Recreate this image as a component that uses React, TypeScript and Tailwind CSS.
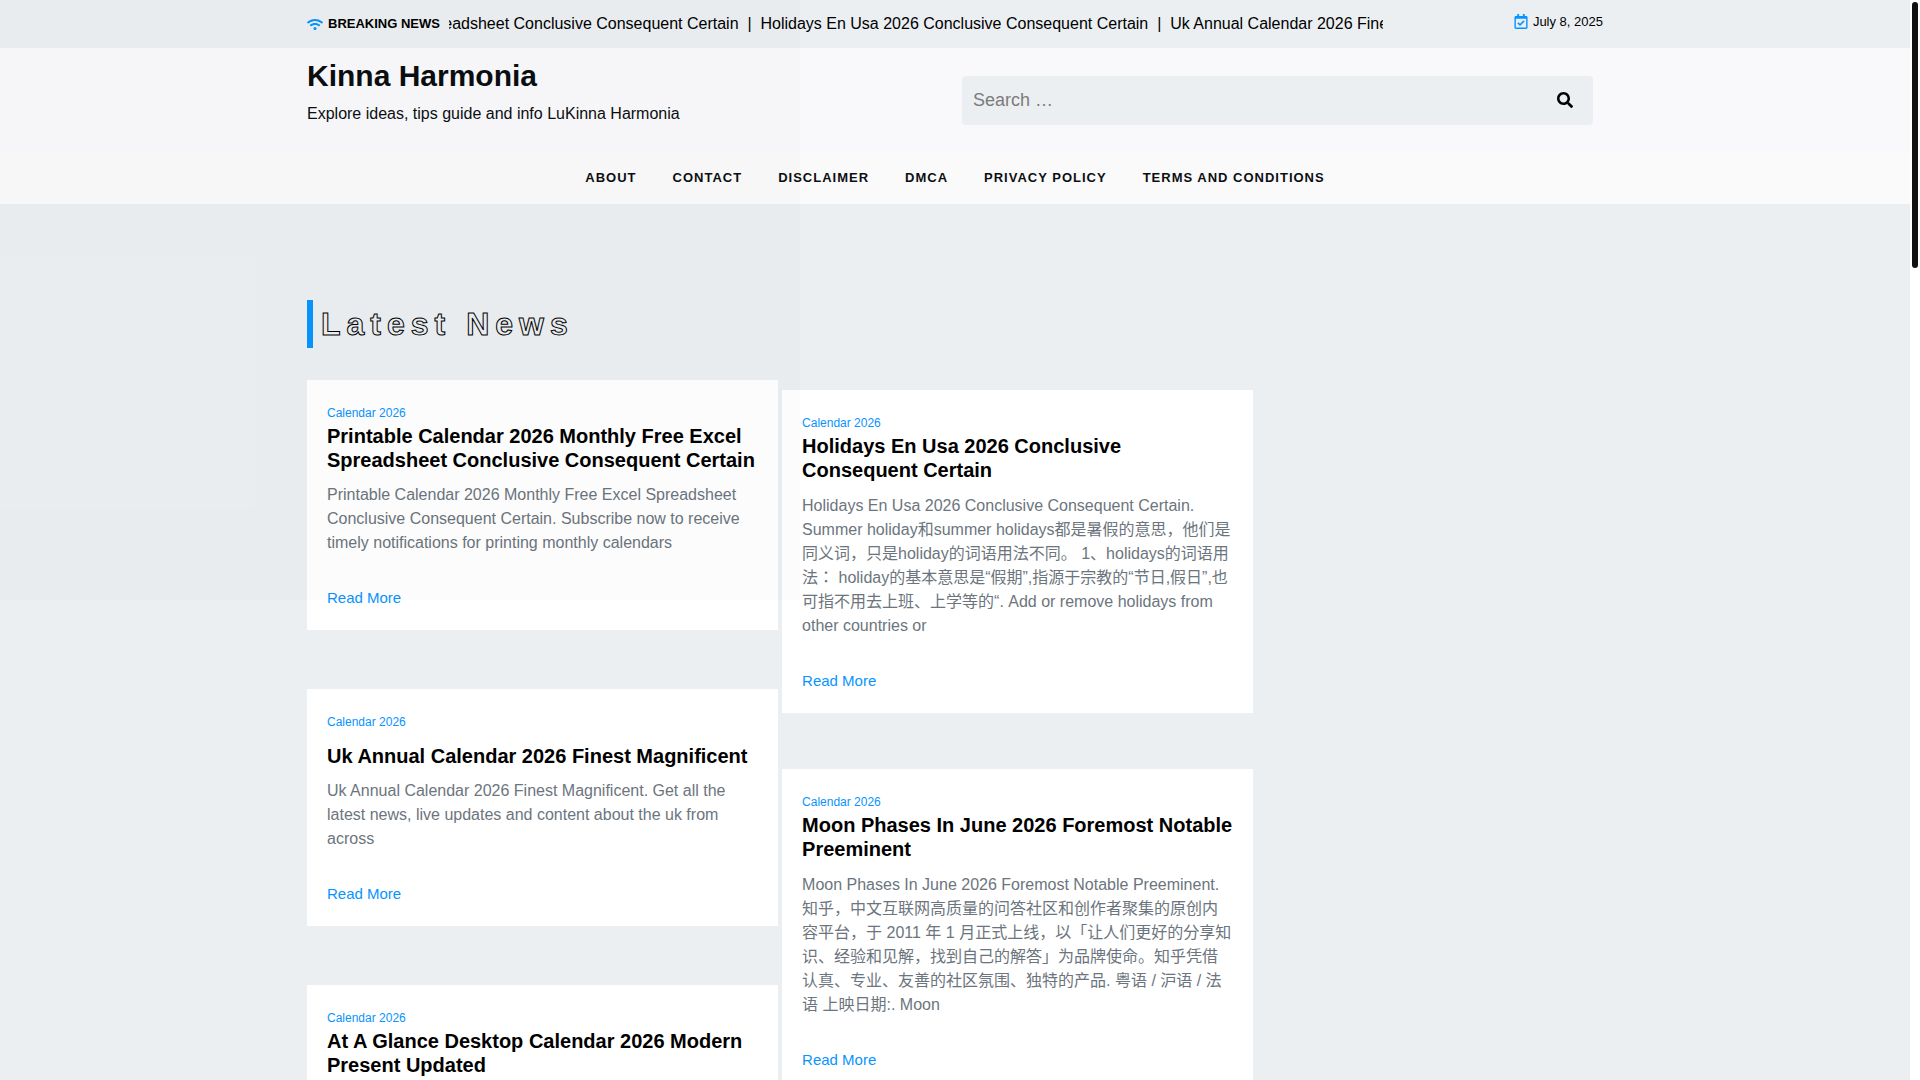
import React from "react";
import { FaWifi, FaRegCalendarCheck, FaSearch } from "react-icons/fa";

type Post = { title: string; text: string; short?: boolean };

const headlines = [
  "Printable Calendar 2026 Monthly Free Excel Spreadsheet Conclusive Consequent Certain",
  "Holidays En Usa 2026 Conclusive Consequent Certain",
  "Uk Annual Calendar 2026 Finest Magnificent",
];

const menu = ["About", "Contact", "Disclaimer", "DMCA", "Privacy Policy", "Terms and Conditions"];

const leftPosts: Post[] = [
  {
    title: "Printable Calendar 2026 Monthly Free Excel Spreadsheet Conclusive Consequent Certain",
    text: "Printable Calendar 2026 Monthly Free Excel Spreadsheet Conclusive Consequent Certain. Subscribe now to receive timely notifications for printing monthly calendars",
  },
  {
    title: "Uk Annual Calendar 2026 Finest Magnificent",
    text: "Uk Annual Calendar 2026 Finest Magnificent. Get all the latest news, live updates and content about the uk from across",
    short: true,
  },
  {
    title: "At A Glance Desktop Calendar 2026 Modern Present Updated",
    text: "At A Glance Desktop Calendar 2026 Modern Present Updated.",
  },
];

const rightPosts: Post[] = [
  {
    title: "Holidays En Usa 2026 Conclusive Consequent Certain",
    text: "Holidays En Usa 2026 Conclusive Consequent Certain. Summer holiday和summer holidays都是暑假的意思，他们是同义词，只是holiday的词语用法不同。 1、holidays的词语用法： holiday的基本意思是“假期”,指源于宗教的“节日,假日”,也可指不用去上班、上学等的“. Add or remove holidays from other countries or",
  },
  {
    title: "Moon Phases In June 2026 Foremost Notable Preeminent",
    text: "Moon Phases In June 2026 Foremost Notable Preeminent. 知乎，中文互联网高质量的问答社区和创作者聚集的原创内容平台，于 2011 年 1 月正式上线，以「让人们更好的分享知识、经验和见解，找到自己的解答」为品牌使命。知乎凭借认真、专业、友善的社区氛围、独特的产品. 粤语 / 沪语 / 法语 上映日期:. Moon",
  },
];

function PostCard({ post }: { post: Post }) {
  return (
    <article className="bg-white px-5 pt-[23px] pb-5">
      <a href="#" className="block text-[12px] leading-5 text-[#0894ff]">
        Calendar 2026
      </a>
      <h3 className={post.short ? "pt-3 text-xl leading-6 font-bold text-black" : "pt-px text-xl leading-6 font-bold text-black"}>
        <a href="#">{post.title}</a>
      </h3>
      <p className="mt-[11px] text-base leading-6 text-[#6c757d]">{post.text}</p>
      <a href="#" className="mt-[31px] block pb-px text-[15px] leading-[23px] text-[#0894ff]">
        Read More
      </a>
    </article>
  );
}

export default function App() {
  return (
    <div className="relative flex h-screen overflow-hidden bg-white font-['Liberation_Sans','Noto_Sans_CJK_JP','Noto_Sans_CJK_SC',sans-serif] text-[#0c0f12]">
      <div className="min-w-0 flex-1 bg-[#ebeff2]">
        <div className="mx-auto flex h-12 max-w-[1320px] items-center px-3">
          <FaWifi className="h-[13px] w-4 shrink-0 text-[#0894ff]" />
          <strong className="ml-[5px] shrink-0 text-[13px] leading-5 text-black">BREAKING NEWS</strong>
          <div className="ml-[9px] w-[934px] overflow-hidden text-base leading-6 text-black">
            <div className="-ml-[349px] flex whitespace-pre">
              {headlines.map((h) => (
                <a href="#" key={h}>{h + "\u00a0 |\u00a0 "}</a>
              ))}
            </div>
          </div>
          <div className="mb-[5px] ml-auto flex shrink-0 items-center gap-[5px] text-[13px] leading-5 text-black">
            <FaRegCalendarCheck className="h-[15px] w-[14px] text-[#0894ff]" />
            <time dateTime="2025-07-08">July 8, 2025</time>
          </div>
        </div>

        <header className="bg-[#f9f9fc]">
          <div className="mx-auto flex h-26 max-w-[1320px] justify-between px-3">
            <div className="pt-[10px]">
              <h1 className="text-[30px] leading-9 font-bold">
                <a href="#">Kinna Harmonia</a>
              </h1>
              <p className="mt-2 text-base leading-6">Explore ideas, tips guide and info LuKinna Harmonia</p>
            </div>
            <form className="mt-7 mr-[10px] flex h-[49px] w-[631px] items-center rounded bg-[#ebeff2]" onSubmit={(e) => e.preventDefault()}>
              <input
                type="search"
                aria-label="Search for"
                placeholder="Search …"
                className="mb-px min-w-0 flex-1 bg-transparent px-[11px] text-lg leading-6 outline-none placeholder:text-[#7b7b7b]"
              />
              <button type="submit" aria-label="Search" className="mr-5 mb-px text-base text-black">
                <FaSearch />
              </button>
            </form>
          </div>
        </header>

        <nav className="bg-[#fafafa]">
          <ul className="flex h-13 items-center justify-center gap-9 text-[13px] leading-5 font-bold tracking-[1px] uppercase">
            {menu.map((m) => (
              <li key={m}><a href="#">{m}</a></li>
            ))}
          </ul>
        </nav>

        <main className="mx-auto max-w-[1320px] px-3 pt-24">
          <h2 className="border-l-6 border-[#0894ff] pl-2 text-[32px] leading-[48px] font-bold tracking-[6px] text-transparent [-webkit-text-stroke:1px_#000]">
            Latest News
          </h2>
          <div className="mt-8 flex w-[73%] items-start gap-1">
            <div className="flex min-w-0 flex-1 flex-col gap-[59px]">
              {leftPosts.map((p) => <PostCard key={p.title} post={p} />)}
            </div>
            <div className="mt-[10px] flex min-w-0 flex-1 flex-col gap-14 [&_p]:mt-3">
              {rightPosts.map((p) => <PostCard key={p.title} post={p} />)}
            </div>
          </div>
        </main>
      </div>

      <div className="w-[10px] shrink-0 px-[2px] pt-[2px]">
        <div className="h-[266px] rounded-full bg-[#111]" />
      </div>

      <div className="pointer-events-none absolute top-0 left-0 h-[600px] w-[800px] bg-black/[0.01]" />
    </div>
  );
}
